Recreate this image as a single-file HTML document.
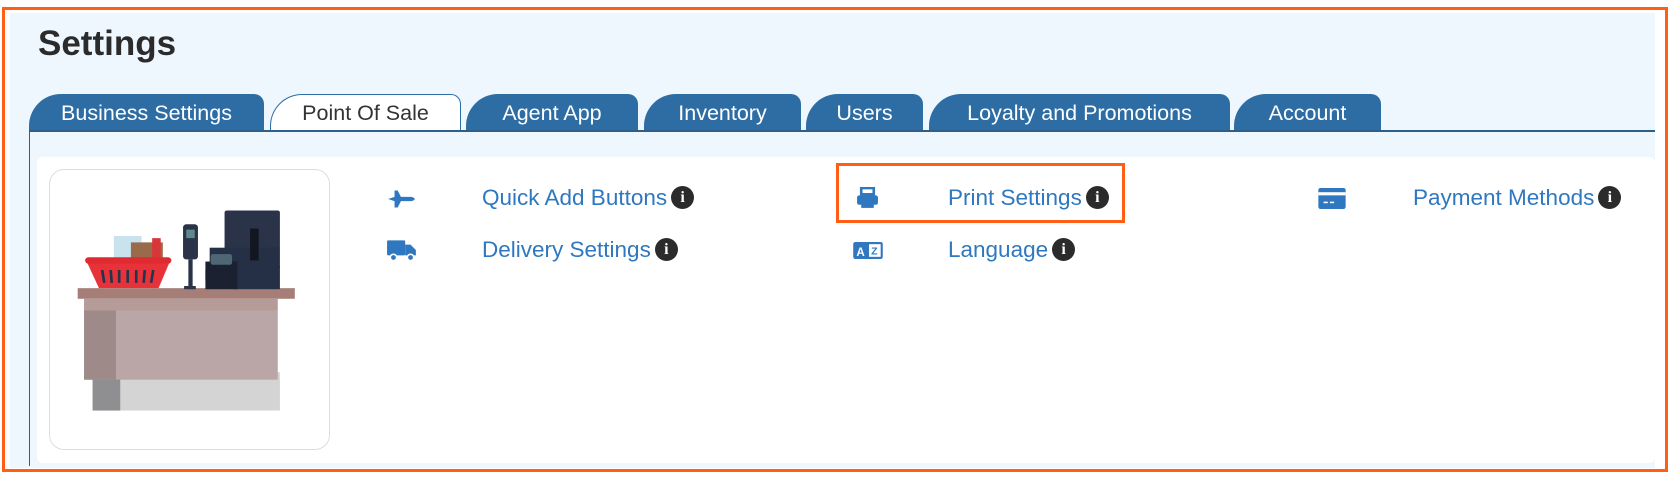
<!DOCTYPE html>
<html><head><style>
*{margin:0;padding:0;box-sizing:border-box}
body{width:1668px;height:477px;background:#fff;position:relative;overflow:hidden;font-family:"Liberation Sans",sans-serif}
.abs{position:absolute}
.outer{left:2px;top:7px;width:1666px;height:465px;border:3px solid #ff5e14}
.panel{left:10px;top:13px;width:1645px;height:455px;background:#eef6fe}
h1{position:absolute;left:38px;top:24px;font-size:35px;font-weight:bold;color:#2b2b2b}
.tab{position:absolute;top:94px;height:37px;background:#2e6da4;color:#fff;font-size:21.5px;text-align:center;line-height:38px;border-radius:32px 10px 0 0}
.tab.act{background:#fff;color:#333;border:1px solid #2e6da4;border-bottom:none;line-height:36px}
.line{left:29px;top:130px;width:1626px;height:1.5px;background:#2e5e8a}
.vline{left:29px;top:130px;width:1px;height:336px;background:#2e5e8a}
.content{left:37px;top:157px;width:1618px;height:306px;background:#fff;border-radius:6px}
.card{left:49px;top:169px;width:281px;height:281px;border:1px solid #ddd;border-radius:15px;background:#fff}
.lnk{position:absolute;font-size:22.5px;color:#2f78bf;line-height:26px}
.i{display:inline-block;width:23px;height:23px;border-radius:50%;background:#2b2b2b;color:#fff;font-size:16px;font-weight:bold;text-align:center;line-height:23px;vertical-align:middle;position:relative;top:-2px;margin-left:4px;font-family:"Liberation Serif",serif}
.ic{position:absolute}
.box{left:836px;top:163px;width:289px;height:60px;border:3px solid #ff5e14}
</style></head><body>
<div class="abs panel"></div>
<h1>Settings</h1>
<div class="tab" style="left:29px;width:235px">Business Settings</div>
<div class="tab act" style="left:270px;width:191px">Point Of Sale</div>
<div class="tab" style="left:466px;width:172px">Agent App</div>
<div class="tab" style="left:644px;width:157px">Inventory</div>
<div class="tab" style="left:806px;width:117px">Users</div>
<div class="tab" style="left:929px;width:301px">Loyalty and Promotions</div>
<div class="tab" style="left:1234px;width:147px">Account</div>
<div class="abs line"></div>
<div class="abs vline"></div>
<div class="abs content"></div>
<div class="abs card">
<svg width="281" height="281" viewBox="0 0 264 264" style="position:absolute;left:0;top:0">
<rect x="40" y="190" width="176" height="36" fill="#d4d4d4"/>
<rect x="40" y="190" width="26" height="36" fill="#8f8f91"/>
<rect x="32" y="132" width="182" height="65" fill="#baa6a6"/>
<rect x="32" y="132" width="30" height="65" fill="#9e8a89"/>
<rect x="26" y="111" width="204" height="10" fill="#a57f77"/>
<rect x="32" y="121" width="182" height="11" fill="#b59c98"/>
<rect x="164" y="38" width="52" height="37" rx="2" fill="#2a3347"/>
<rect x="172" y="90" width="44" height="22" fill="#253046"/>
<rect x="150" y="73" width="66" height="19" fill="#253046"/>
<rect x="188" y="55" width="8" height="30" fill="#12161f"/>
<rect x="146" y="86" width="30" height="26" fill="#1b2130"/>
<rect x="146" y="94" width="26" height="10" fill="#1b2130"/>
<rect x="151" y="79" width="20" height="10" rx="2" fill="#4f6775"/>
<rect x="125" y="51" width="14" height="33" rx="3" fill="#2a3347"/>
<rect x="128" y="56" width="8" height="8" fill="#5e8a8a"/>
<rect x="130" y="84" width="4" height="26" fill="#2a3347"/>
<rect x="126" y="109" width="11" height="3" fill="#2a3347"/>
<rect x="60" y="62" width="26" height="26" fill="#c9e3ee"/>
<rect x="76" y="68" width="30" height="18" fill="#9a6b4a"/>
<rect x="96" y="64" width="8" height="24" fill="#d8363a"/>
<path d="M34 85 H113 L102 111 H46 Z" fill="#e8323a"/>
<rect x="33" y="82" width="81" height="6" rx="3" fill="#e02a32"/>
<g stroke="#26344a" stroke-width="2.5"><line x1="49" y1="94" x2="51" y2="106"/><line x1="57" y1="94" x2="58" y2="106"/><line x1="65" y1="94" x2="65" y2="106"/><line x1="73" y1="94" x2="73" y2="106"/><line x1="81" y1="94" x2="81" y2="106"/><line x1="89" y1="94" x2="88" y2="106"/><line x1="97" y1="94" x2="95" y2="106"/></g>
</svg></div>

<svg class="ic" style="left:386px;top:187px" width="32" height="24" viewBox="0 0 30 22"><path d="M2 11 L8 9 L8 3 L11 3 L14 9 L24 9 Q30 11 24 13 L14 13 L11 19 L8 19 L8 13 L2 11 Z" fill="#2f78bf"/></svg>
<div class="lnk" style="left:482px;top:185px">Quick Add Buttons<span class="i">i</span></div>
<svg class="ic" style="left:386px;top:238px" width="32" height="24" viewBox="0 0 30 22"><rect x="1" y="2" width="17" height="14" rx="1" fill="#2f78bf"/><path d="M18 6 H23 L28 11 V16 H18 Z" fill="#2f78bf"/><circle cx="7" cy="18" r="3" fill="#2f78bf" stroke="#fff" stroke-width="1.5"/><circle cx="23" cy="18" r="3" fill="#2f78bf" stroke="#fff" stroke-width="1.5"/></svg>
<div class="lnk" style="left:482px;top:237px">Delivery Settings<span class="i">i</span></div>

<div class="abs box"></div>
<svg class="ic" style="left:856px;top:187px" width="23" height="23" viewBox="0 0 22 22"><rect x="5" y="1" width="12" height="6" fill="none" stroke="#2f78bf" stroke-width="2.5"/><rect x="1" y="8" width="20" height="9" rx="2" fill="#2f78bf"/><rect x="5" y="14" width="12" height="6" fill="#2f78bf"/></svg>
<div class="lnk" style="left:948px;top:185px">Print Settings<span class="i">i</span></div>
<svg class="ic" style="left:853px;top:241px" width="30" height="19" viewBox="0 0 28 18"><rect x="0" y="1" width="28" height="16" rx="2" fill="#2f78bf"/><text x="3" y="14" font-size="11" font-weight="bold" fill="#fff" font-family="Liberation Sans">A</text><rect x="15" y="3" width="11" height="12" fill="#fff"/><text x="17" y="13" font-size="10" font-weight="bold" fill="#2f78bf" font-family="Liberation Sans">Z</text></svg>
<div class="lnk" style="left:948px;top:237px">Language<span class="i">i</span></div>

<svg class="ic" style="left:1318px;top:188px" width="28" height="21" viewBox="0 0 26 20"><rect x="0" y="0" width="26" height="20" rx="2" fill="#2f78bf"/><rect x="0" y="4" width="26" height="3" fill="#fff"/><rect x="5" y="13" width="4" height="1.5" fill="#fff"/><rect x="11" y="13" width="4" height="1.5" fill="#fff"/></svg>
<div class="lnk" style="left:1413px;top:185px">Payment Methods<span class="i">i</span></div>

<div class="abs outer"></div>
</body></html>
